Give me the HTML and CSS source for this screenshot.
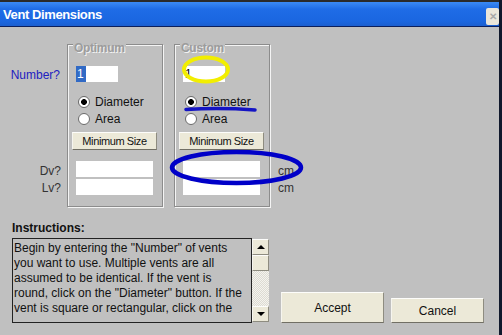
FILE: index.html
```html
<!DOCTYPE html>
<html lang="en">
<head>
    <meta charset="UTF-8">
    <title>Vent Dimensions</title>
    <link rel="stylesheet" href="styles.css">
</head>
<body>
    <div class="window">
        <div class="top-strip"></div>
        <div class="titlebar">
            <span class="title">Vent Dimensions</span>
            <span class="close-btn">&#x2715;</span>
        </div>

        <div class="content">
            <div class="upper">
                <div class="labels">
                    <div class="lbl lbl-number">Number?</div>
                    <div class="lbl lbl-dv">Dv?</div>
                    <div class="lbl lbl-lv">Lv?</div>
                </div>

                <div class="group">
                    <div class="legend">Optimum</div>
                    <div class="field field-small"><span class="selected">1</span></div>
                    <div class="radio-row first"><span class="radio checked"></span>Diameter</div>
                    <div class="radio-row"><span class="radio"></span>Area</div>
                    <div class="btn btn-small">Minimum Size</div>
                    <div class="field field-wide dv"></div>
                    <div class="field field-wide lv"></div>
                </div>

                <div class="group custom">
                    <div class="legend">Custom</div>
                    <div class="field field-small"><span class="value">1</span></div>
                    <div class="radio-row first"><span class="radio checked"></span>Diameter</div>
                    <div class="radio-row"><span class="radio"></span>Area</div>
                    <div class="btn btn-small">Minimum Size</div>
                    <div class="field field-wide dv"></div>
                    <div class="field field-wide lv"></div>
                </div>

                <div class="units">
                    <div class="unit">cm</div>
                    <div class="unit">cm</div>
                </div>
            </div>

            <div class="lower">
                <div class="instructions">
                    <div class="instr-label">Instructions:</div>
                    <div class="instr-box">
                        <div class="instr-text">Begin by entering the "Number" of vents<br>you want to use. Multiple vents are all<br>assumed to be identical. If the vent is<br>round, click on the "Diameter" button. If the<br>vent is square or rectangular, click on the</div>
                        <div class="scrollbar">
                            <div class="sb-btn"><span class="arrow-up"></span></div>
                            <div class="sb-thumb"></div>
                            <div class="sb-track"></div>
                            <div class="sb-btn"><span class="arrow-down"></span></div>
                        </div>
                    </div>
                </div>
                <div class="btn btn-accept">Accept</div>
                <div class="btn btn-cancel">Cancel</div>
            </div>
        </div>

        <svg class="marks" width="502" height="335" viewBox="0 0 502 335">
            <ellipse cx="206" cy="69.5" rx="22" ry="12" fill="none" stroke="#f2ee00" stroke-width="4"/>
            <path d="M186 109.5 Q220 107.5 255 110" fill="none" stroke="#1414c4" stroke-width="3.5" stroke-linecap="round"/>
            <ellipse cx="236.5" cy="167.5" rx="64.5" ry="15.5" fill="none" stroke="#0000c8" stroke-width="4.5"/>
        </svg>
    </div>
</body>
</html>
```

FILE: styles.css
```css
body {
    margin: 0;
    background: #c0c0c0;
    font-family: 'Liberation Sans', Arial, sans-serif;
    font-size: 12px;
    overflow: hidden;
}

.window {
    position: relative;
    width: 502px;
    height: 335px;
    box-sizing: border-box;
    border-right: 3px solid #10182c;
    background: #c0c0c0;
    display: flex;
    flex-direction: column;
}

.top-strip {
    height: 2px;
    background: #2a2a2a;
}

.titlebar {
    height: 24px;
    border-bottom: 1px solid #0b1f5c;
    background: linear-gradient(#3b8af4, #1f6ce6 30%, #1a66e0 80%, #1b5fd0);
    display: flex;
    align-items: center;
    padding-left: 3px;
}

.title {
    color: #fff;
    font-weight: bold;
    font-size: 13px;
    letter-spacing: -0.4px;
}

.close-btn {
    margin-left: auto;
    align-self: flex-start;
    margin-top: 6px;
    width: 13px;
    height: 17px;
    background: #ebe6da;
    border-radius: 2px;
    color: #a9a9a9;
    font-size: 10px;
    font-weight: bold;
    display: flex;
    align-items: center;
    justify-content: center;
}

.upper {
    display: flex;
    padding-top: 17px;
}

.labels {
    width: 67px;
    display: flex;
    flex-direction: column;
}

.lbl {
    height: 16px;
    line-height: 16px;
    text-align: right;
    padding-right: 6px;
}

.lbl-number {
    margin-top: 23px;
    color: #2020c0;
    padding-right: 7px;
}

.lbl-dv {
    margin-top: 80px;
    color: #333;
}

.lbl-lv {
    margin-top: 1px;
    color: #333;
}

.group {
    width: 96px;
    height: 163px;
    box-sizing: border-box;
    border: 1px solid #8c8c8c;
    box-shadow: inset 1px 1px 0 #f4f4f4, 1px 1px 0 #f4f4f4;
    display: flex;
    flex-direction: column;
}

.group.custom {
    margin-left: 11px;
}

.legend {
    align-self: flex-start;
    margin-top: -4px;
    margin-left: 5px;
    padding: 0 1px;
    height: 14px;
    line-height: 14px;
    background: #c0c0c0;
    color: #9c9c9c;
    font-weight: bold;
    letter-spacing: -0.3px;
    text-shadow: 1px 1px 0 #f2f2f2;
}

.field {
    background: #fff;
    height: 16px;
    margin-left: 8px;
    box-sizing: border-box;
}

.field-small {
    width: 42px;
    margin-top: 11px;
    display: flex;
    align-items: stretch;
}

.selected {
    background: #316ac5;
    color: #fff;
    width: 10px;
    line-height: 16px;
    padding-left: 1px;
    box-sizing: border-box;
}

.value {
    line-height: 16px;
    padding-left: 2px;
}

.radio-row {
    height: 14px;
    display: flex;
    align-items: center;
    margin-left: 10px;
    color: #111;
}

.radio-row.first {
    margin-top: 13px;
    margin-bottom: 3px;
}

.radio {
    width: 12px;
    height: 12px;
    box-sizing: border-box;
    border: 1px solid #6a6a6a;
    border-radius: 50%;
    background: #fff;
    margin-right: 5px;
}

.radio.checked {
    background: radial-gradient(circle, #000 0 2.6px, #fff 3.2px);
}

.btn {
    background: #ece9d8;
    box-sizing: border-box;
    border: 1px solid;
    border-color: #fdfdfb #8e8c80 #716f64 #f6f5ef;
    color: #111;
    display: flex;
    align-items: center;
    justify-content: center;
}

.btn-small {
    width: 85px;
    height: 18px;
    margin-top: 6px;
    margin-left: 4px;
    font-size: 11px;
    letter-spacing: -0.4px;
}

.field-wide {
    width: 77px;
}

.field-wide.dv {
    margin-top: 11px;
}

.field-wide.lv {
    margin-top: 2px;
}

.units {
    margin-left: 8px;
    padding-top: 119px;
    display: flex;
    flex-direction: column;
}

.unit {
    height: 17px;
    line-height: 16px;
    color: #333;
}

.lower {
    display: flex;
    align-items: flex-end;
    padding-left: 12px;
    margin-top: 14px;
}

.instr-label {
    height: 14px;
    line-height: 14px;
    font-weight: bold;
    color: #111;
    margin-bottom: 3px;
}

.instr-box {
    display: flex;
    height: 85px;
}

.instr-text {
    width: 240px;
    box-sizing: border-box;
    border: 1px solid #222;
    padding: 2px 0 0 1px;
    line-height: 15px;
    color: #111;
    white-space: nowrap;
    overflow: hidden;
}

.scrollbar {
    width: 17px;
    padding-top: 1px;
    padding-bottom: 1px;
    box-sizing: border-box;
    display: flex;
    flex-direction: column;
}

.sb-btn,
.sb-thumb {
    height: 16px;
    background: #ece9d8;
    box-sizing: border-box;
    border: 1px solid;
    border-color: #fdfdfb #8e8c80 #8e8c80 #f6f5ef;
    display: flex;
    align-items: center;
    justify-content: center;
}

.sb-track {
    flex: 1;
    background: repeating-conic-gradient(#f4f3ee 0 25%, #dddbd2 0 50%) 0 0 / 2px 2px;
}

.arrow-up {
    border-left: 4px solid transparent;
    border-right: 4px solid transparent;
    border-bottom: 4px solid #000;
}

.arrow-down {
    border-left: 4px solid transparent;
    border-right: 4px solid transparent;
    border-top: 4px solid #000;
}

.btn-accept {
    width: 103px;
    height: 31px;
    margin-left: 12px;
}

.btn-cancel {
    width: 93px;
    height: 25px;
    margin-left: 7px;
}

.marks {
    position: absolute;
    top: 0;
    left: 0;
    pointer-events: none;
}
```
